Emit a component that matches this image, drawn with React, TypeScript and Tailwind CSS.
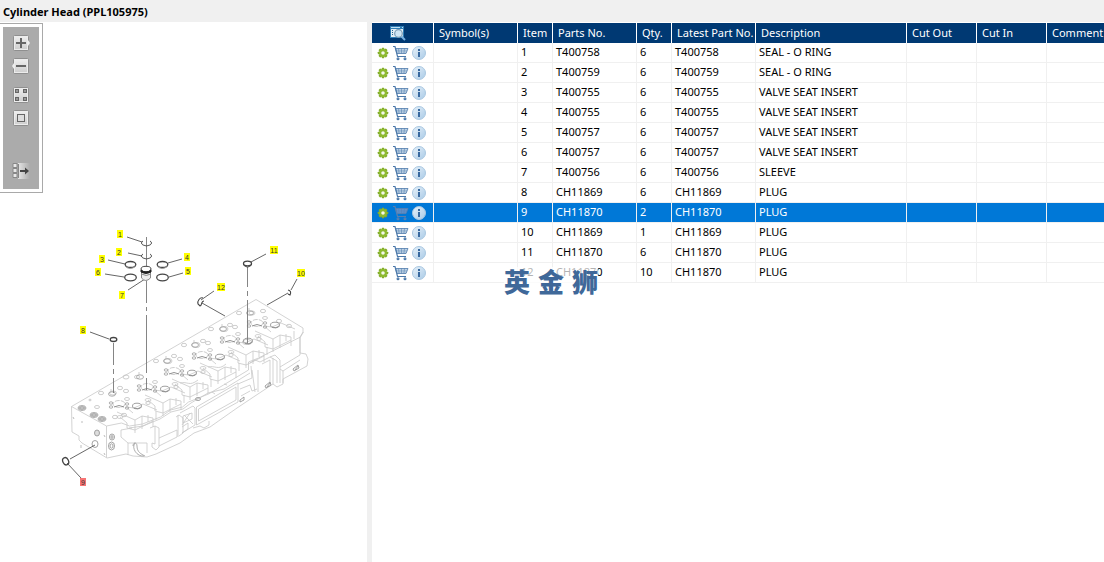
import React from "react";

type Part = { item: number; part: string; qty: number; description: string };

const parts: Part[] = [
  { item: 1, part: "T400758", qty: 6, description: "SEAL - O RING" },
  { item: 2, part: "T400759", qty: 6, description: "SEAL - O RING" },
  { item: 3, part: "T400755", qty: 6, description: "VALVE SEAT INSERT" },
  { item: 4, part: "T400755", qty: 6, description: "VALVE SEAT INSERT" },
  { item: 5, part: "T400757", qty: 6, description: "VALVE SEAT INSERT" },
  { item: 6, part: "T400757", qty: 6, description: "VALVE SEAT INSERT" },
  { item: 7, part: "T400756", qty: 6, description: "SLEEVE" },
  { item: 8, part: "CH11869", qty: 6, description: "PLUG" },
  { item: 9, part: "CH11870", qty: 2, description: "PLUG" },
  { item: 10, part: "CH11869", qty: 1, description: "PLUG" },
  { item: 11, part: "CH11870", qty: 6, description: "PLUG" },
  { item: 12, part: "CH11870", qty: 10, description: "PLUG" },
];

const SELECTED_ITEM = 9;

function GearIcon() {
  return (
    <svg width="12" height="12" viewBox="0 0 12 12" aria-hidden="true">
      <g fill="#83ad2b">
        {[0, 45, 90, 135].map((a) => (
          <rect key={a} x="4.7" y="0.8" width="2.6" height="10.4" rx="0.6" transform={`rotate(${a} 6 6)`} />
        ))}
      </g>
      <circle cx="6" cy="6" r="2.900" fill="none" stroke="#8dba2e" strokeWidth="2" />
      <circle cx="6" cy="6" r="1.800" fill="#f4f9e8" />
    </svg>
  );
}

function CartIcon({ dim }: { dim: boolean }) {
  return (
    <svg width="17" height="16" viewBox="0 0 17 16" fill="none" stroke={dim ? "#5a7fae" : "#4b78aa"} aria-hidden="true">
      <path d="M3.500 3.500h12.500l-2 5H5z" fill={dim ? "#5f93d0" : "#d3e2f0"} strokeWidth="0.800" />
      <path d="M4 5.200h11M4.500 6.900h10M6.500 3.500l.6 5M9.500 3.500v5M12.500 3.500l-.6 5" strokeWidth="0.500" />
      <path d="M1 1.500h2L5.500 11.500H14" strokeWidth="1.200" />
      <circle cx="6" cy="13.700" r="0.900" strokeWidth="1.200" />
      <circle cx="13" cy="13.700" r="0.900" strokeWidth="1.200" />
    </svg>
  );
}

function InfoIcon() {
  return (
    <svg width="14" height="14" viewBox="0 0 14 14" aria-hidden="true">
      <defs>
        <linearGradient id="info-face" x1="0" y1="0" x2="1" y2="1">
          <stop offset="0" stopColor="#e8f2fa" />
          <stop offset="1" stopColor="#a9cae6" />
        </linearGradient>
      </defs>
      <circle cx="7" cy="7" r="6.500" fill="url(#info-face)" stroke="#a9c7e1" />
      <path d="M6 3h2v2H6zM6 6h2v5H6z" fill="#38699f" />
    </svg>
  );
}

function SearchListIcon() {
  return (
    <svg width="16" height="16" viewBox="0 0 16 16" aria-hidden="true">
      <path d="M0 1h14v12H0z" fill="#2f7db5" />
      <path d="M1 4h12v8H1z" fill="#e3eef5" />
      <path d="M1 2.500h9M12 2.500h1" stroke="#bfe0f4" />
      <path d="M2 5.500h1M2 7.500h1M2 9.500h1" stroke="#25658f" />
      <path d="M11.500 11.500L15 15" stroke="#75afe0" strokeWidth="2" />
      <circle cx="8.500" cy="8.500" r="3.800" fill="#cfe5f4" stroke="#789ab3" strokeWidth="1.200" />
    </svg>
  );
}

function ToolFace() {
  return (
    <>
      <defs>
        <linearGradient id="tool-face" x1="0" y1="0" x2="0" y2="1">
          <stop offset="0" stopColor="#f0f0f0" />
          <stop offset="1" stopColor="#cccccc" />
        </linearGradient>
      </defs>
      <rect x="1.500" y="0.500" width="15" height="15" rx="1" fill="url(#tool-face)" stroke="#8f8f8f" />
      <rect x="2.500" y="1.500" width="13" height="13" fill="none" stroke="#ececec" />
    </>
  );
}

function ToolButton({ label, className, children }: { label: string; className: string; children: React.ReactNode }) {
  return (
    <button type="button" aria-label={label} className={`block h-4 w-[18px] ${className}`}>
      <svg width="18" height="16" viewBox="0 0 18 16" aria-hidden="true">
        {children}
      </svg>
    </button>
  );
}

function Toolbar() {
  return (
    <div className="w-fit border border-l-0 border-[#a9a9a9] bg-white p-[3px]">
      <div role="toolbar" aria-label="Drawing" className="flex h-[162px] w-9 flex-col items-center bg-[#ababab] pt-2">
        <ToolButton label="Zoom in" className="">
          <ToolFace />
          <path d="M16 5l2 3-2 3z" fill="#eee" />
          <path d="M4 8h10M9 3v10" stroke="#666" strokeWidth="2" />
        </ToolButton>
        <ToolButton label="Zoom out" className="mt-[7px]">
          <ToolFace />
          <path d="M2 5L0 8l2 3z" fill="#eee" />
          <path d="M4 8h10" stroke="#666" strokeWidth="2" />
        </ToolButton>
        <ToolButton label="Fit to window" className="mt-[13px]">
          <ToolFace />
          <g fill="#999" stroke="#666">
            <rect x="3.500" y="2.500" width="3" height="3" />
            <rect x="11.500" y="2.500" width="3" height="3" />
            <rect x="3.500" y="10.500" width="3" height="3" />
            <rect x="11.500" y="10.500" width="3" height="3" />
          </g>
        </ToolButton>
        <ToolButton label="Actual size" className="mt-[7px]">
          <ToolFace />
          <rect x="5.500" y="4.500" width="7" height="7" fill="#ddd" stroke="#666" />
        </ToolButton>
        <ToolButton label="Hide drawing" className="mt-[37px]">
          <defs>
            <linearGradient id="fade" x1="0" x2="1">
              <stop offset="0" stopColor="#e5e5e5" />
              <stop offset="1" stopColor="#ababab" />
            </linearGradient>
          </defs>
          <path d="M6 0h12v16H6z" fill="url(#fade)" />
          <path d="M1 .5h4v4H1zM1 5.500h4v4H1zM1 10.500h4v4H1z" fill="#e8e8e8" stroke="#888" />
          <path d="M6.500 1v14" stroke="#888" />
          <path d="M8 8h7" stroke="#444" strokeWidth="2" />
          <path d="M13 4.500L17 8l-4 3.500z" fill="#444" />
        </ToolButton>
      </div>
    </div>
  );
}

const callouts = [
  { n: 1, x: 120, y: 234 },
  { n: 2, x: 119, y: 252 },
  { n: 3, x: 102, y: 259 },
  { n: 4, x: 187, y: 257 },
  { n: 5, x: 188, y: 271 },
  { n: 6, x: 98, y: 272 },
  { n: 7, x: 122, y: 295 },
  { n: 8, x: 83, y: 330 },
  { n: 9, x: 83, y: 482 },
  { n: 10, x: 301, y: 273 },
  { n: 11, x: 274, y: 250 },
  { n: 12, x: 221, y: 287 },
];

const cylinders = [
  [119, 405],
  [147, 388],
  [174, 372],
  [202, 356],
  [230, 340],
  [257, 324],
];

const holes: [number, number, number, number][] = [
  [90, 400, 1.2, 0.8], [101, 393, 2.6, 1.700], [97, 407, 2.5, 1.500], [126, 377, 3, 2], [137, 377, 2.6, 1.7],
  [156, 361, 2.600, 1.700], [184, 345, 2.600, 1.700], [168, 361, 4, 2.600], [174, 356, 2.600, 1.700], [180, 359, 2.600, 1.700],
  [196, 345, 4, 2.600], [203, 341, 2.600, 1.700], [208, 343, 2.600, 1.700], [211, 329, 2.600, 1.700], [224, 329, 4, 2.600],
  [230, 325, 2.600, 1.700], [235, 327, 2.600, 1.700], [239, 313, 2.600, 1.700], [252, 313, 3, 2], [263, 311, 2.600, 1.700],
  [279, 321, 2.600, 1.700], [289, 326, 2.500, 1.700], [115, 417, 2.600, 1.700], [124, 415, 2.600, 1.700],
  [120, 388, 2.600, 1.700], [126, 391, 2.600, 1.700], [148, 403, 2.200, 1.500], [176, 387, 2.200, 1.500],
  [203, 372, 2.200, 1.500], [231, 355, 2.200, 1.500], [259, 339, 2.200, 1.500], [113, 393, 3.500, 2], [247, 342, 4.500, 2.500],
];

function CylinderHeadDrawing() {
  return (
    <svg
      className="block shrink-0"
      width="367"
      height="369"
      viewBox="0 193 367 369"
      role="img"
      aria-label="Cylinder head exploded view"
      fill="none"
    >
      <g stroke="#c8c8c8" strokeWidth="0.800" strokeLinejoin="round">
        <path
          d="M71.500 406.500L256 299.500 303 328v4l-3 5v16l6 1 2 5-1 7-24 13v5l-6 3-4-3-36 24-27 19-16 6-14 10-24 11-9 3-14-1-7-2-19 4-25-15-3-3v-4l-7-4z"
          fill="#fff"
        />
        <path d="M71.500 406.500l35 19.500v31.500M106.500 426l15-3 8 3 13-2 18-7 10-7 12-3 6-5 20-8 15-9 25-15v-8l10-4 42-21 3-5" />
        <path d="M121 430v7l7 6h19v10M121 430l11-2M128 443v12M129 428l14-2 17-7 11-7 12-3 8-6 17-10 16-4 26-16" />
        <path d="M150 428l5-2 4 2v19l-3 3-4-3v-4l3 1v-18M159 438l18-8v7l-18 9M178 415v22M176 417l3-2 4 3v15l-4 3" />
        <path d="M133 446c0-4 4-4 4 0 0 6 4 8 8 10M135 443c-4 5 2 14 9 13" stroke="#999" />
        <path d="M196.500 407L238 383v19l-41.500 23zM198.500 409l37.500-22v13l-37.500 21zM180 413l13-7 2 2v17l-13 8M183 416l9-3v6l-9 4zM182 427l6-4v6l-6 4M190 413l-8 12m2-10l9 9" />
        <path d="M193 428l7-2 4 2 5-3v-4M212 392l3 2m9-10l3 1M238 384l14-6-1-12M240 389l10-4 2 6 5-2M241 396l9-5" />
        <path d="M250 363l5-3 5 2 10-5 5-2 5 5v23M258 370v22M252 370l3 22M270 357l7 4v22M280 369l3 2v12M280 367l20-12v-18M273 358v26M262 364l8-4v24M283 371l17-11" />
        <path d="M180 383c8-2 9 4 18-3m10-13c7-2 10 4 18-3" />
        {cylinders.map(([x, y]) => (
          <g key={x}>
            <path d={`M${x - 2} ${y + 7}l18 8v13m0-13l7-4 11 2v9m-11-11v13m-9-16l-7-6 8 1 9-4 14 6`} />
            <path d={`M${x + 1} ${y + 12}l7 6v5l8 2 18-9m3-9v8m-8-5v7`} />
            <ellipse cx={x + 1} cy={y + 12} rx="3" ry="1.500" />
          </g>
        ))}
      </g>
      <g stroke="#c0c0c0" strokeWidth="0.800">
        {holes.map(([x, y, rx, ry], i) => (
          <ellipse key={i} cx={x} cy={y} rx={rx} ry={ry} />
        ))}
        {cylinders.map(([x, y]) => (
          <g key={x}>
            <ellipse cx={x} cy={y - 1} rx="6" ry="3.500" strokeDasharray="5 1" />
            <ellipse cx={x - 7} cy={y - 11} rx="3.500" ry="2.200" stroke="#999" />
            <path d={`M${x - 8} ${y - 13}v-3`} />
            <ellipse cx={x + 8} cy={y - 6} rx="2.500" ry="1.500" />
            <ellipse cx={x + 8} cy={y - 1} rx="1.800" ry="1.200" stroke="#999" />
            <ellipse cx={x + 8} cy={y + 3} rx="1.800" ry="1.200" stroke="#999" />
            <ellipse cx={x - 8} cy={y - 2} rx="1.800" ry="1.200" stroke="#999" />
            <ellipse cx={x - 8} cy={y + 2} rx="1.800" ry="1.200" stroke="#999" />
            <path d={`M${x - 5} ${y + 2}q5-3 10 0`} stroke="#777" />
            <ellipse cx={x + 18} cy={y + 1} rx="4.500" ry="2.800" stroke="#888" />
            <path d={`M${x + 15} ${y + 3}q4 2 7-1`} stroke="#888" />
          </g>
        ))}
      </g>
      <g stroke="#999" strokeWidth="0.900">
        {[
          [82, 408],
          [94, 415],
          [102, 419],
        ].map(([x, y]) => (
          <g key={x}>
            <ellipse cx={x} cy={y} rx="4" ry="2.400" />
            <ellipse cx={x} cy={y} rx="2.600" ry="1.300" fill="#ccc" />
          </g>
        ))}
        <ellipse cx="97" cy="433" rx="2.500" ry="3" fill="#ddd" />
        <ellipse cx="95" cy="444" rx="3" ry="3.500" />
        <ellipse cx="112" cy="437" rx="2.500" ry="3" />
        <ellipse cx="112" cy="437" rx="1" ry="1.500" />
        <ellipse cx="111.500" cy="446" rx="3" ry="4" />
        <ellipse cx="111.500" cy="446" rx="1.500" ry="2.200" />
        <path d="M73 417l1 2m7 3h2m21 13l1 2m-1 16l1 2m-24-7v-3" stroke="#b5b5b5" />
        <path d="M265 386l5-4 1 3-5 3zM293 369l5-4 1 3-5 3zM240 400l4-3v3l-4 2zM267 387l3-4M295 370l3-4" />
        <ellipse cx="198" cy="399" rx="2.500" ry="1.500" />
      </g>
      <g stroke="#777" strokeWidth="0.900">
        <path d="M146.500 237v40M146.500 281v22m0 4v4m0 4v58m0 5v12M247.500 267v20m0 4v5m0 4v43M113.500 343v22m0 4v5m0 4v15" />
        <path
          d="M127 237l15 5M128 253l14 3M108 260l17 4M182 259l-14 4M183 273l-14 4M105 274l19 3M128 290l17-11M90 332l19 7M266 254l-15 8M297 279l-6 11M288 293l-21 12M214 291l-13 9M202 303l23 13M70 459l25-14M67 463l14 15"
          stroke="#555"
        />
      </g>
      <g stroke="#444">
        <path d="M143 241a5 2.800 0 1 0 7 0M143 254a5 2.800 0 1 0 7 0" strokeWidth="0.900" />
        <g strokeWidth="1.300">
          <ellipse cx="130.500" cy="264.500" rx="5.300" ry="3" />
          <ellipse cx="162.500" cy="264.500" rx="5.300" ry="3" />
          <ellipse cx="130.500" cy="277.500" rx="5.800" ry="3.300" />
          <ellipse cx="162.500" cy="277.500" rx="5.800" ry="3.300" />
          <ellipse cx="247.500" cy="263.500" rx="4" ry="2.300" />
          <path d="M243.500 263v2q4 4 8 0v-2" strokeWidth="1" />
          <ellipse cx="113.500" cy="339.500" rx="3.300" ry="2" />
          <ellipse cx="65.500" cy="461.500" rx="2.800" ry="3.800" transform="rotate(-25 65 461)" />
          <path d="M203 298c-3-1-6 3-5 6l2 2c2 0 1-5 4-5" strokeWidth="1.100" />
          <path d="M288 290q4 1 2 5l-2-1" strokeWidth="1.100" />
        </g>
        <path d="M125 266q5 5 11 0M157 266q5 5 11 0" stroke="#999" />
        <path d="M141.500 269v9q4 5 9 0v-9M141.500 274q5 3 9 0" stroke="#888" fill="#eee" />
        <ellipse cx="146" cy="269" rx="5" ry="2.700" fill="#fff" />
        <path d="M141 270q5 4 10 0v2q-5 3-10 0z" fill="#222" stroke="#222" />
      </g>
      <g fontFamily="'Liberation Sans', sans-serif" fontSize="7" textAnchor="middle" fill="#333">
        {callouts.map(({ n, x, y }) => (
          <g key={n}>
            <rect
              x={n > 9 ? x - 4 : x - 3}
              y={y - 4}
              width={n > 9 ? 8 : 6}
              height="8"
              fill={n === SELECTED_ITEM ? "#f77474" : "#ffff00"}
            />
            <text x={x} y={y + 3}>
              {n}
            </text>
          </g>
        ))}
      </g>
    </svg>
  );
}

const headCell = "h-5 overflow-hidden border-r border-white px-[5px] py-0 text-left font-normal last:border-r-0";
const cell = "h-5 border-r border-b border-[#f0f0f0] px-[3px] pt-0 pb-[2px] last:border-r-0";
const iconCell = "h-5 border-r border-b border-[#f0f0f0] px-[3px] py-0";

function PartsTable() {
  return (
    <table className="w-full table-fixed border-separate border-spacing-0 whitespace-nowrap text-[11px] leading-4">
      <colgroup>
        <col className="w-[62px]" />
        <col className="w-[84px]" />
        <col className="w-[35px]" />
        <col className="w-[84px]" />
        <col className="w-[35px]" />
        <col className="w-[84px]" />
        <col className="w-[151px]" />
        <col className="w-[70px]" />
        <col className="w-[70px]" />
        <col />
      </colgroup>
      <thead className="bg-[#003973] text-white">
        <tr>
          <th scope="col" aria-label="Actions" className={headCell}>
            <div className="flex items-center justify-center pr-[10px]">
              <SearchListIcon />
            </div>
          </th>
          {["Symbol(s)", "Item", "Parts No.", "Qty.", "Latest Part No.", "Description", "Cut Out", "Cut In", "Comment"].map((h) => (
            <th key={h} scope="col" className={headCell}>
              {h}
            </th>
          ))}
        </tr>
      </thead>
      <tbody>
        {parts.map((p) => {
          const selected = p.item === SELECTED_ITEM;
          return (
            <tr key={p.item} aria-selected={selected} className={selected ? "bg-[#0078d7] text-white" : "text-black"}>
              <td className={iconCell}>
                <div className="flex items-center gap-[3px] pl-[2px]">
                  <button type="button" aria-label={`Options for item ${p.item}`}>
                    <GearIcon />
                  </button>
                  <button type="button" aria-label={`Add item ${p.item} to cart`}>
                    <CartIcon dim={selected} />
                  </button>
                  <button type="button" aria-label={`Information on item ${p.item}`}>
                    <InfoIcon />
                  </button>
                </div>
              </td>
              <td className={cell} />
              <td className={cell}>{p.item}</td>
              <td className={cell}>{p.part}</td>
              <td className={cell}>{p.qty}</td>
              <td className={cell}>{p.part}</td>
              <td className={cell}>{p.description}</td>
              <td className={cell} />
              <td className={cell} />
              <td className={cell} />
            </tr>
          );
        })}
      </tbody>
    </table>
  );
}

export default function App() {
  return (
    <div className="flex min-h-screen flex-col bg-white font-['Noto_Sans',sans-serif] text-black">
      <header className="flex h-[22px] items-center bg-[#f0f0f0] px-[3px] pt-px">
        <h1 className="text-[11px] leading-4 font-bold">Cylinder Head (PPL105975)</h1>
      </header>
      <div className="flex grow">
        <section aria-label="Drawing" className="w-[367px] shrink-0 pt-px">
          <Toolbar />
          <CylinderHeadDrawing />
        </section>
        <div className="w-[5px] shrink-0 bg-[#f0f0f0]" />
        <section aria-label="Parts list" className="relative min-w-0 grow overflow-hidden pt-px">
          <PartsTable />
          <div className="pointer-events-none absolute top-[245px] left-[132px] flex gap-2 bg-white/70 font-['Noto_Sans_CJK_SC',sans-serif] text-[26px] leading-[28px] font-black text-[#3f6899]">
            <span>英</span>
            <span>金</span>
            <span>狮</span>
          </div>
        </section>
      </div>
    </div>
  );
}
